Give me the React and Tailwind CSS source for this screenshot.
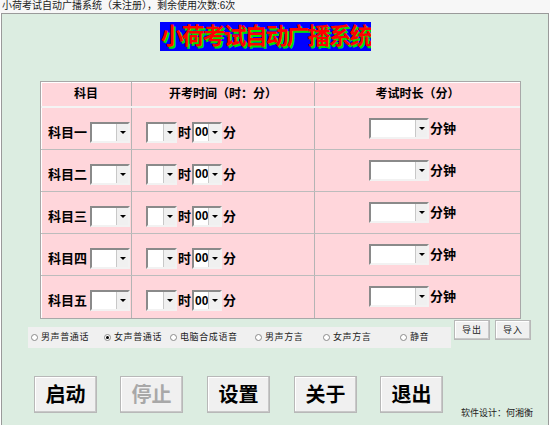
import React from 'react';

const cjk = "font-['Liberation_Sans','Noto_Sans_CJK_SC',sans-serif]";

function Combo({ w, value }) {
  return (
    <div
      className="flex shrink-0 h-[21px] border-2 border-t-[#8a8a8a] border-l-[#8a8a8a] border-b-[#f2f2f2] border-r-[#f2f2f2] bg-white"
      style={{ width: w }}
    >
      <div className="flex-1 flex items-center pl-[1px] text-[12px] font-bold leading-none text-black">{value}</div>
      <div className="w-[12px] flex items-center justify-center bg-[#f0f0f0] border-l border-[#c8c8c8]">
        <div className="w-0 h-0 border-l-[3px] border-r-[3px] border-t-[3px] border-l-transparent border-r-transparent border-t-black" />
      </div>
    </div>
  );
}

function Radio({ label, checked, w }) {
  return (
    <div className="flex shrink-0 items-center gap-[3px] whitespace-nowrap" style={{ width: w }}>
      <div className="w-[7px] h-[7px] rounded-full border border-[#8a8a8a] bg-white flex items-center justify-center">
        {checked && <div className="w-[3px] h-[3px] rounded-full bg-black" />}
      </div>
      <span className="text-[9px] tracking-[0.6px] text-[#222] leading-none">{label}</span>
    </div>
  );
}

function BigButton({ label, disabled }) {
  return (
    <button
      className={`w-[63px] h-[37px] bg-[#f0f0f0] border border-[#b8b8b8] shadow-[inset_-1px_-1px_0_#c8c8c8,inset_1px_1px_0_#ffffff] text-[20px] font-bold leading-none ${disabled ? 'text-[#a8a8a8]' : 'text-black'}`}
    >
      {label}
    </button>
  );
}

function SmallButton({ label }) {
  return (
    <button className="w-[36px] h-[20px] bg-[#f0f0f0] border border-[#b8b8b8] shadow-[inset_-1px_-1px_0_#c8c8c8,inset_1px_1px_0_#ffffff] text-[9px] tracking-[1px] text-[#222] leading-none whitespace-nowrap">
      {label}
    </button>
  );
}

const subjects = ['科目一', '科目二', '科目三', '科目四', '科目五'];

const voices = [
  { label: '男声普通话', w: 73 },
  { label: '女声普通话', w: 66, checked: true },
  { label: '电脑合成语音', w: 85 },
  { label: '男声方言', w: 68 },
  { label: '女声方言', w: 77 },
  { label: '静音', w: 40 },
];

export default function App() {
  return (
    <div className={`w-[550px] h-[425px] overflow-hidden bg-white relative ${cjk}`}>
      {/* title bar */}
      <div className="h-[13px] pl-[2px] text-[10px] leading-[12px] text-[#222] bg-[#f7f7f7] whitespace-nowrap">
        小荷考试自动广播系统（未注册），剩余使用次数:6次
      </div>

      {/* window */}
      <div className="ml-[1px] w-[548px] h-[420px] border border-[#9a9a9a] border-b-0 bg-[#dcede1] flex flex-col">
        {/* banner */}
        <div className="ml-[158px] mt-[8px] w-[211px] h-[29px] bg-[#0000ff] flex items-center justify-center overflow-hidden">
          <span className="text-[23px] tracking-[-2px] font-bold leading-none whitespace-nowrap text-[#ff0000] [text-shadow:2px_2px_0_#00e000]">
            小荷考试自动广播系统
          </span>
        </div>

        {/* table */}
        <div className="ml-[38px] mt-[30px] w-[481px] border border-[#a8a8a8] bg-[#ffd6db] shadow-[inset_1px_1px_0_#ffffff]">
          <div className="grid grid-cols-[91px_183px_205px] h-[26px] border-b-2 border-b-[#f4f4f4] text-[12px] font-bold text-black">
            <div className="flex items-center justify-center border-r border-[#b4b4b4]">科目</div>
            <div className="flex items-center justify-center border-r border-[#b4b4b4]">开考时间（时：分）</div>
            <div className="flex items-center justify-center">考试时长（分）</div>
          </div>
          {subjects.map((s, i) => (
            <div
              key={s}
              className={`grid grid-cols-[91px_183px_205px] h-[42px] ${i < 4 ? 'border-b border-[#bcbcbc]' : ''}`}
            >
              <div className="flex items-center pl-[7px] pt-[7px] border-r border-[#b4b4b4]">
                <span className="w-[42px] text-[13px] font-bold text-black leading-none whitespace-nowrap">{s}</span>
                <Combo w={40} />
              </div>
              <div className="flex items-center pl-[14px] pt-[7px] border-r border-[#b4b4b4]">
                <Combo w={31} />
                <span className="text-[13px] font-bold text-black leading-none ml-[1px] mr-[1px]">时</span>
                <Combo w={30} value="00" />
                <span className="text-[13px] font-bold text-black leading-none ml-[1px]">分</span>
              </div>
              <div className="flex items-center pl-[54px] pb-[1px]">
                <Combo w={60} />
                <span className="text-[13px] font-bold text-black leading-none ml-[1px] whitespace-nowrap">分钟</span>
              </div>
            </div>
          ))}
        </div>

        {/* radio bar + small buttons */}
        <div className="flex items-start mt-[1px]">
          <div className="ml-[26px] mt-[7px] w-[423px] shrink-0 h-[21px] pl-[3px] bg-[#f0f0f0] flex items-center">
            {voices.map((v) => (
              <Radio key={v.label} label={v.label} checked={v.checked} w={v.w} />
            ))}
          </div>
          <div className="ml-[3px] flex gap-[5px]">
            <SmallButton label="导出" />
            <SmallButton label="导入" />
          </div>
        </div>

        {/* big buttons + footer */}
        <div className="flex items-start mt-[28px] ml-[32px]">
          <BigButton label="启动" />
          <div className="ml-[23px]"><BigButton label="停止" disabled /></div>
          <div className="ml-[24px]"><BigButton label="设置" /></div>
          <div className="ml-[24px]"><BigButton label="关于" /></div>
          <div className="ml-[23px]"><BigButton label="退出" /></div>
          <span className="ml-[18px] mt-[33px] text-[9px] text-[#222] leading-none whitespace-nowrap">
            软件设计：何湘衡
          </span>
        </div>
      </div>
    </div>
  );
}
